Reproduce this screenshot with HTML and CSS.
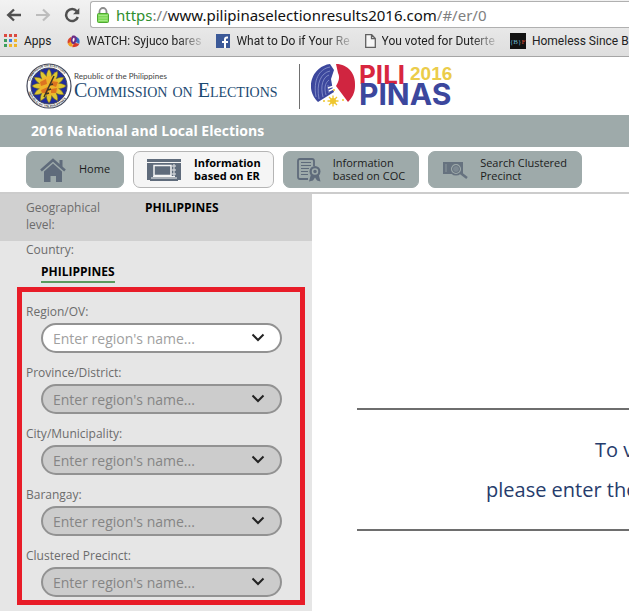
FILE: index.html
```
<!DOCTYPE html>
<html lang="en">
<head>
  <meta charset="UTF-8" />
  <meta name="viewport" content="width=device-width, initial-scale=1.0"/>
  <title>2016 National and Local Elections</title>
  <link rel="stylesheet" href="styles.css">
</head>
<body>
  <div class="browser">
    <div class="toolbar">
      <button type="button" class="tool" aria-label="Back">
        <svg width="16" height="16" viewBox="0 0 16 16"><path d="M15 8H2.500M8 2.500L2.200 8L8 13.500" fill="none" stroke="#505050" stroke-width="2.400"/></svg>
      </button>
      <button type="button" class="tool" aria-label="Forward">
        <svg width="16" height="16" viewBox="0 0 16 16"><path d="M1 8H13.500M8 2.500L13.800 8L8 13.500" fill="none" stroke="#bdbdbd" stroke-width="2.200"/></svg>
      </button>
      <button type="button" class="tool" aria-label="Reload">
        <svg width="16" height="16" viewBox="0 0 16 16"><path d="M12.800 4.300A6 6 0 1 0 13.800 10" fill="none" stroke="#505050" stroke-width="2.500"/><path d="M15.300 1V7.300H9z" fill="#505050"/></svg>
      </button>
      <div class="address">
        <svg width="12" height="16" viewBox="0 0 12 16"><path d="M2.500 8V4.500a3.500 3.500 0 0 1 7 0V8" fill="none" stroke="#8c8c8c" stroke-width="1.800"/><rect x="0.500" y="6.500" width="11" height="9" rx="1" fill="#7ed957" stroke="#4ea832"/><path d="M1.500 8.500h9M1.500 11h9M1.500 13.500h9" stroke="#a4e985"/></svg>
        <span class="url"><span class="secure">https</span>://<b>www.pilipinaselectionresults2016.com</b>/#/er/0</span>
      </div>
    </div>
    <div class="bookmarks">
      <a href="#" class="apps">
        <svg width="14" height="14" viewBox="0 0 14 14"><path d="M0 0h3v3H0zM5 0h3v3H5zM10 0h3v3h-3z" fill="#db4a3f"/><path d="M0 5h3v3H0z" fill="#3d9e5c"/><path d="M5 5h3v3H5z" fill="#3f7de0"/><path d="M10 5h3v3h-3zM5 10h3v3H5zM10 10h3v3h-3z" fill="#efb52b"/><path d="M0 10h3v3H0z" fill="#3d9e5c"/></svg>
        <span>Apps</span>
      </a>
      <a href="#" class="watch">
        <svg width="14" height="16" viewBox="0 0 16 16"><path d="M5 3C1 5 0 8 1 11L5 9z" fill="#d9452e"/><path d="M1 11c1 3 4 4 6 3L5 8z" fill="#f2a01f"/><path d="M6 15c4 0 7-1 8-4L8 10z" fill="#d83a2b"/><path d="M10 3c4 1 5 4 4 8L10 9z" fill="#2f6fc4"/><path d="M6 2c3-1 6 1 5 5S8 12 6 11 4 5 6 2z" fill="#6b2d87"/><path d="M8 4c1 1 1 4-1 5-1-1-1-4 1-5z" fill="#fff"/></svg>
        <span class="fade">WATCH: Syjuco bares</span>
      </a>
      <a href="#" class="facebook">
        <svg width="14" height="14" viewBox="0 0 14 14"><rect width="14" height="14" fill="#3b5998"/><path d="M12 3.500h-1c-1.500 0-2 .7-2 2V14M6 8h6" fill="none" stroke="#fff" stroke-width="2"/></svg>
        <span class="fade">What to Do if Your Re</span>
      </a>
      <a href="#" class="voted">
        <svg width="11" height="14" viewBox="0 0 11 14"><path d="M.7.700h6L10.300 4.500v8.800H.7zM6.500.700v4h3.800" fill="#f6f6f6" stroke="#606060" stroke-width="1.300"/></svg>
        <span class="fade">You voted for Duterte</span>
      </a>
      <a href="#" class="homeless">
        <svg width="16" height="16" viewBox="0 0 16 16"><rect width="16" height="16" fill="#111"/><text x="0" y="11" class="bf">{B}<tspan fill="#d84a35">F</tspan></text></svg>
        <span>Homeless Since Birth</span>
      </a>
    </div>
  </div>

  <header class="brand">
    <svg class="seal" width="46" height="46" viewBox="0 0 46 46">
      <defs>
        <path id="ringTop" d="M3.500 23a19.500 19.500 0 0 1 39 0"/>
        <path id="ringBottom" d="M1.800 23a21.200 21.200 0 0 0 42.400 0"/>
        <path id="petal" d="M23 6c2.200 2.500 3 6 2.500 10h-5C20 12 20.800 8.500 23 6z"/>
      </defs>
      <circle cx="23" cy="23" r="22" fill="#fff" stroke="#44485a" stroke-width="1.200"/>
      <circle cx="23" cy="23" r="18" fill="#1f2c9c" stroke="#44485a"/>
      <text class="ring"><textPath href="#ringTop" startOffset="5">COMMISSION ON ELECTIONS</textPath></text>
      <text class="ring"><textPath href="#ringBottom" startOffset="6">REPUBLIC OF THE PHILIPPINES</textPath></text>
      <g fill="#dfc832" stroke="#6d6420" stroke-width=".5">
        <use href="#petal"/>
        <use href="#petal" transform="rotate(30 23 23)"/>
        <use href="#petal" transform="rotate(60 23 23)"/>
        <use href="#petal" transform="rotate(90 23 23)"/>
        <use href="#petal" transform="rotate(120 23 23)"/>
        <use href="#petal" transform="rotate(150 23 23)"/>
        <use href="#petal" transform="rotate(180 23 23)"/>
        <use href="#petal" transform="rotate(210 23 23)"/>
        <use href="#petal" transform="rotate(240 23 23)"/>
        <use href="#petal" transform="rotate(270 23 23)"/>
        <use href="#petal" transform="rotate(300 23 23)"/>
        <use href="#petal" transform="rotate(330 23 23)"/>
      </g>
      <circle cx="23" cy="23" r="10" fill="#eeb52b"/>
      <path d="M14 19l6-3 1 5-6 2zM25 18l7 1-2 5-5-2zM15 27l7-3v6h-6zM25 26l6-1-1 5h-5z" fill="#dc7420"/>
      <path d="M18 34L28 13M20 31l3-1M22 27l3-1M24 22l3-1" stroke="#3b3526" stroke-width="1.500"/>
    </svg>
    <div class="comelec">
      <span class="republic">Republic of the Philippines</span>
      <span class="commission">Commission on Elections</span>
    </div>
    <svg class="pilipinas" width="146" height="46" viewBox="0 0 146 46">
      <path d="M19 1A22 22 0 0 0 7 39L23 29C21 24 21 21 20 16L23 7z" fill="#3c479d"/>
      <g fill="none" stroke="#9aa4d6" stroke-width=".7">
        <path d="M19 4C8 6 2 17 5 34M19 8C10 10 5 20 8 36M18 12C12 14 9 23 12 34M18 17C14 20 13 25 15 32M17 22C17 26 17 28 18 30"/>
      </g>
      <path d="M25 1C37 1 45 11 44 23C44 30 41 35 37 39L25 23C28 18 29 14 27 10z" fill="#d02540"/>
      <path d="M17 25l6-2M18 28l6-3" stroke="#fff" stroke-width="1.500"/>
      <circle cx="22" cy="38" r="3" fill="#efc62e"/>
      <path d="M22 32.500v11M16.500 38h11M18 34l8 8M26 34l-8 8" stroke="#efc62e" stroke-width="1.300"/>
      <path d="M23 26v2M12 38h2M31 37h2" stroke="#efc62e" stroke-width="1.500"/>
      <text x="48" y="21" class="pili">PILI</text>
      <text x="48" y="42" class="pinas">PINAS</text>
      <text x="99" y="17" class="year">2016</text>
    </svg>
  </header>

  <div class="banner"><h1>2016 National and Local Elections</h1></div>

  <nav class="tabs">
    <a href="#" class="tab home">
      <svg width="26" height="24" viewBox="0 0 26 24"><path d="M1 12.500L13 2L25 12.500" fill="none" stroke="#5f6b7b" stroke-width="2.500"/><path d="M19.500 2H22.500V9l-3-2.500z" fill="#5f6b7b"/><path d="M4 13.500L13 5.500L22 13.500V24H16V18H10.500V24H4z" fill="#5f6b7b"/></svg>
      <span>Home</span>
    </a>
    <a href="#" class="tab er active">
      <svg width="34" height="24" viewBox="0 0 34 24"><path d="M0 1h34v3H0zM0 5h34v17h-3v1H3v-1H0z" fill="#5f6b7b"/><path d="M7 7.500h17v10H7z" fill="#5f6b7b" stroke="#f5f5f5" stroke-width="1.500"/><path d="M4 20h26M6 18.500h22" stroke="#f5f5f5" stroke-width="1"/><g fill="none" stroke="#f5f5f5"><circle cx="27" cy="8" r="1.200"/><circle cx="27" cy="12" r="1.200"/><circle cx="27" cy="16" r="1.200"/></g></svg>
      <span>Information<br>based on ER</span>
    </a>
    <a href="#" class="tab coc">
      <svg width="24" height="24" viewBox="0 0 24 24"><path d="M11 21H3q-2 0-2-2V3q0-2 2-2h12q2 0 2 2v5" fill="none" stroke="#5f6b7b" stroke-width="1.800"/><path d="M4 4.500h10M4 7.500h10M4 10.500h8M4 13.500h7M4 16.500h7" stroke="#5f6b7b"/><path d="M14 16l-2 7.500 4-1 2-3 2 3 3.500 1-2-7.500z" fill="#5f6b7b"/><circle cx="18" cy="13.500" r="5.500" fill="#5f6b7b"/><circle cx="18" cy="13.500" r="2.500" fill="none" stroke="#9eaaaa" stroke-width="1.500"/></svg>
      <span>Information<br>based on COC</span>
    </a>
    <a href="#" class="tab search">
      <svg width="26" height="18" viewBox="0 0 26 18"><path d="M0 1h20v12H0z" fill="#66727f"/><path d="M3 3v8" stroke="#8a969c"/><circle cx="13" cy="8" r="6" fill="#9eaaaa"/><circle cx="13" cy="8" r="5.800" fill="none" stroke="#66727f" stroke-width="1.500"/><circle cx="13" cy="8" r="3.500" fill="#7d8992" stroke="#66727f"/><path d="M17.500 12l6.500 5" stroke="#66727f" stroke-width="2.500"/></svg>
      <span>Search Clustered<br>Precinct</span>
    </a>
  </nav>

  <div class="content">
    <aside class="sidebar">
      <div class="geo">
        <span class="geo-label">Geographical level:</span>
        <strong>PHILIPPINES</strong>
      </div>
      <div class="country">
        <span>Country:</span>
        <a href="#">PHILIPPINES</a>
      </div>
      <form class="filters">
        <div class="field">
          <label for="region">Region/OV:</label>
          <div class="picker">
            <select id="region"><option>Enter region's name...</option></select>
            <svg width="14" height="9" viewBox="0 0 14 9"><path d="M1.500 1.500L7 7L12.500 1.500"/></svg>
          </div>
        </div>
        <div class="field">
          <label for="province">Province/District:</label>
          <div class="picker">
            <select id="province" disabled><option>Enter region's name...</option></select>
            <svg width="14" height="9" viewBox="0 0 14 9"><path d="M1.500 1.500L7 7L12.500 1.500"/></svg>
          </div>
        </div>
        <div class="field">
          <label for="city">City/Municipality:</label>
          <div class="picker">
            <select id="city" disabled><option>Enter region's name...</option></select>
            <svg width="14" height="9" viewBox="0 0 14 9"><path d="M1.500 1.500L7 7L12.500 1.500"/></svg>
          </div>
        </div>
        <div class="field">
          <label for="barangay">Barangay:</label>
          <div class="picker">
            <select id="barangay" disabled><option>Enter region's name...</option></select>
            <svg width="14" height="9" viewBox="0 0 14 9"><path d="M1.500 1.500L7 7L12.500 1.500"/></svg>
          </div>
        </div>
        <div class="field">
          <label for="precinct">Clustered Precinct:</label>
          <div class="picker">
            <select id="precinct" disabled><option>Enter region's name...</option></select>
            <svg width="14" height="9" viewBox="0 0 14 9"><path d="M1.500 1.500L7 7L12.500 1.500"/></svg>
          </div>
        </div>
      </form>
    </aside>
    <main>
      <div class="message">
        <p class="lead">To view</p>
        <p>please enter the</p>
      </div>
    </main>
  </div>
</body>
</html>
```
FILE: styles.css
```
* {
  box-sizing: border-box;
}
body {
  margin: 0;
  min-height: 100vh;
  display: flex;
  flex-direction: column;
  font-family: "Open Sans", sans-serif;
  font-size: 12px;
  color: #111;
  background: #fff;
  overflow-x: hidden;
}
a {
  color: inherit;
  text-decoration: none;
}
svg {
  flex-shrink: 0;
}

/* browser bar */
.browser {
  background: linear-gradient(#f2f2f2, #dedede);
  border-bottom: 1px solid #a5a5a5;
  white-space: nowrap;
  overflow: hidden;
}
.toolbar {
  display: flex;
  align-items: center;
  gap: 13px;
  padding: 1px 0 0 6px;
}
.tool {
  display: flex;
  padding: 0;
  border: none;
  background: none;
}
.address {
  flex: 1;
  display: flex;
  align-items: center;
  gap: 7px;
  height: 27px;
  margin-left: -3px;
  padding-left: 6px;
  background: #fff;
  border: 1px solid #b0b0b0;
  border-right: none;
  border-radius: 3px 0 0 3px;
}
.url {
  font-family: "Noto Sans", sans-serif;
  font-size: 15px;
  color: #808080;
}
.url b {
  font-weight: normal;
  color: #111;
}
.secure {
  color: #2f8f2f;
}
.bookmarks {
  display: flex;
  align-items: center;
  gap: 15px;
  height: 28px;
  padding: 0 0 2px 4px;
  color: #222;
}
.bookmarks a {
  display: flex;
  align-items: center;
  flex-shrink: 0;
  gap: 6px;
  font-family: Roboto, sans-serif;
  font-size: 12px;
}
.bf {
  font: 7px "Liberation Serif", serif;
  fill: #6fb6cf;
}
.fade {
  -webkit-mask-image: linear-gradient(to left, rgba(0,0,0,0.2), #000 24px);
  mask-image: linear-gradient(to left, rgba(0,0,0,0.2), #000 24px);
}

/* logos */
.brand {
  display: flex;
  align-items: center;
  height: 58px;
  padding-left: 26px;
}
.comelec {
  display: flex;
  flex-direction: column;
  width: 228px;
  height: 45px;
  padding: 7px 0 0 2px;
  margin-right: 11px;
  border-right: 1px solid #707070;
  white-space: nowrap;
}
.republic {
  font-family: Lato, sans-serif;
  font-size: 8px;
  line-height: 10px;
  color: #444;
}
.commission {
  font-family: "Liberation Serif", serif;
  font-size: 20px;
  line-height: 18px;
  font-variant: small-caps;
  color: #1c4a72;
}
.ring {
  font: bold 3px "Liberation Sans", sans-serif;
  fill: #333;
}
.pili, .pinas {
  font-family: Inter, sans-serif;
  font-weight: 700;
}
.pili {
  font-size: 26px;
  fill: #d8263f;
}
.pinas {
  font-size: 30px;
  fill: #3c479d;
}
.year {
  font: bold 19px "Liberation Sans", sans-serif;
  fill: #ebcc4a;
}

.banner {
  background: #9eaaaa;
  padding: 7px 31px;
}
.banner h1 {
  margin: 0;
  font-size: 14px;
  line-height: 18px;
  color: #fff;
}

/* tabs */
.tabs {
  display: flex;
  gap: 9px;
  padding: 4px 26px;
  border-bottom: 2px solid #ccc;
}
.tab {
  display: flex;
  align-items: center;
  flex-shrink: 0;
  height: 37px;
  border: 1px solid #9eaaaa;
  border-radius: 7px;
  background: #9eaaaa;
  font-size: 11px;
  line-height: 13px;
  color: #1c1c1c;
}
.tab span {
  padding-bottom: 2px;
}
.home {
  gap: 13px;
  padding: 0 13px;
}
.er {
  gap: 13px;
  padding: 0 12px 0 13px;
}
.coc {
  gap: 12px;
  padding: 0 13px;
}
.search {
  gap: 11px;
  padding: 0 14px;
}
.active {
  background: #f5f5f5;
  border-color: #b5b5b5;
  font-weight: bold;
  color: #000;
}

.content {
  flex: 1;
  display: flex;
}
.sidebar {
  flex: none;
  width: 312px;
  background: #e6e6e6;
  color: #6c6c6c;
}
.geo {
  display: flex;
  padding: 5px 26px 8px;
  background: #d0d0d0;
  line-height: 17px;
}
.geo-label {
  width: 119px;
  padding-right: 30px;
}
.geo strong {
  color: #000;
}
.country {
  display: flex;
  flex-direction: column;
  align-items: flex-start;
  gap: 4px;
  padding: 0 26px 4px;
  line-height: 18px;
}
.country a {
  margin-left: 15px;
  border-bottom: 2px solid #5a9a5e;
  font-weight: bold;
  color: #000;
}
.filters {
  display: flex;
  flex-direction: column;
  gap: 11px;
  margin: 0 7px 6px 17px;
  padding: 11px 18px 3px 4px;
  border: 5px solid #e81c28;
}
.field {
  line-height: 18px;
}
.field label {
  display: block;
  margin-bottom: 2px;
}
.picker {
  position: relative;
  margin-left: 15px;
}
.picker select {
  display: block;
  appearance: none;
  width: 100%;
  height: 30px;
  padding: 0 10px;
  border: 2px solid #929292;
  border-radius: 15px;
  background: #fff;
  font-family: inherit;
  font-size: 14px;
  color: #a0a0a0;
}
.picker select:disabled {
  background: #ccc;
  color: #858585;
  opacity: 1;
}
.picker svg {
  position: absolute;
  right: 17px;
  top: 10px;
  pointer-events: none;
}
.picker path {
  fill: none;
  stroke: #222;
  stroke-width: 2;
}

main {
  flex: 1;
  min-width: 0;
  padding: 214px 0 0 45px;
}
.message {
  padding: 20px 0 19px 129px;
  border-top: 2px solid #6e6e6e;
  border-bottom: 2px solid #6e6e6e;
  font-size: 20px;
  line-height: 40px;
  color: #263c6c;
  white-space: nowrap;
  overflow: hidden;
}
.message p {
  margin: 0;
}
.message .lead {
  padding-left: 109px;
}
```
